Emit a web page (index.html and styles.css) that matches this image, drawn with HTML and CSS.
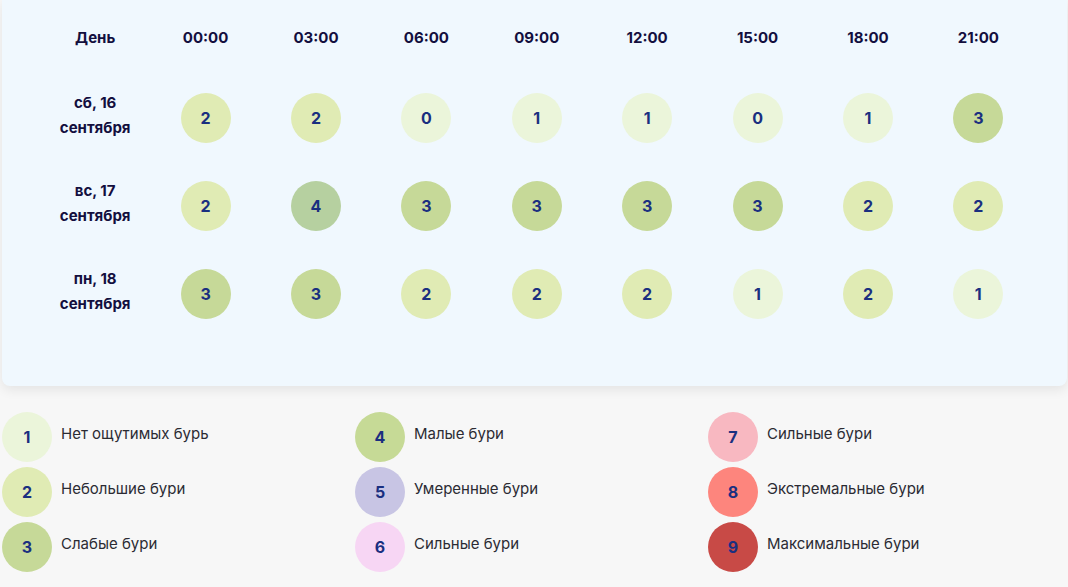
FILE: index.html
```html
<!DOCTYPE html>
<html lang="ru">
<head>
<meta charset="utf-8">
<title>Магнитные бури</title>
<link rel="stylesheet" href="styles.css">
</head>
<body>
<div class="panel">
  <div class="table">
    <div class="head">День</div>
    <div class="head">00:00</div>
    <div class="head">03:00</div>
    <div class="head">06:00</div>
    <div class="head">09:00</div>
    <div class="head">12:00</div>
    <div class="head">15:00</div>
    <div class="head">18:00</div>
    <div class="head">21:00</div>

    <div class="day">сб, 16<br>сентября</div>
    <div class="cell"><span class="dot l2">2</span></div>
    <div class="cell"><span class="dot l2">2</span></div>
    <div class="cell"><span class="dot l1">0</span></div>
    <div class="cell"><span class="dot l1">1</span></div>
    <div class="cell"><span class="dot l1">1</span></div>
    <div class="cell"><span class="dot l1">0</span></div>
    <div class="cell"><span class="dot l1">1</span></div>
    <div class="cell"><span class="dot l3">3</span></div>

    <div class="day">вс, 17<br>сентября</div>
    <div class="cell"><span class="dot l2">2</span></div>
    <div class="cell"><span class="dot l4t">4</span></div>
    <div class="cell"><span class="dot l3">3</span></div>
    <div class="cell"><span class="dot l3">3</span></div>
    <div class="cell"><span class="dot l3">3</span></div>
    <div class="cell"><span class="dot l3">3</span></div>
    <div class="cell"><span class="dot l2">2</span></div>
    <div class="cell"><span class="dot l2">2</span></div>

    <div class="day">пн, 18<br>сентября</div>
    <div class="cell"><span class="dot l3">3</span></div>
    <div class="cell"><span class="dot l3">3</span></div>
    <div class="cell"><span class="dot l2">2</span></div>
    <div class="cell"><span class="dot l2">2</span></div>
    <div class="cell"><span class="dot l2">2</span></div>
    <div class="cell"><span class="dot l1">1</span></div>
    <div class="cell"><span class="dot l2">2</span></div>
    <div class="cell"><span class="dot l1">1</span></div>
  </div>
</div>

<div class="legend">
  <div class="item"><span class="dot l1">1</span><span class="label">Нет ощутимых бурь</span></div>
  <div class="item"><span class="dot l4">4</span><span class="label">Малые бури</span></div>
  <div class="item"><span class="dot l7">7</span><span class="label">Сильные бури</span></div>
  <div class="item"><span class="dot l2">2</span><span class="label">Небольшие бури</span></div>
  <div class="item"><span class="dot l5">5</span><span class="label">Умеренные бури</span></div>
  <div class="item"><span class="dot l8">8</span><span class="label">Экстремальные бури</span></div>
  <div class="item"><span class="dot l3">3</span><span class="label">Слабые бури</span></div>
  <div class="item"><span class="dot l6">6</span><span class="label">Сильные бури</span></div>
  <div class="item"><span class="dot l9">9</span><span class="label">Максимальные бури</span></div>
</div>
</body>
</html>
```

FILE: styles.css
```css
* { box-sizing: border-box; }

body {
  margin: 0;
  background: #f7f7f7;
  font-family: Inter, "Noto Sans", "Liberation Sans", sans-serif;
}

.panel {
  margin-left: 2px;
  width: 1065px;
  height: 386px;
  padding: 2px 0 0 38px;
  background: #f0f8fe;
  border-radius: 0 0 8px 8px;
  box-shadow: 0 4px 12px rgba(0, 0, 0, 0.08);
}

.table {
  display: grid;
  grid-template-columns: repeat(9, 110.4px);
  grid-template-rows: 72px repeat(3, 88px);
}

.head, .day, .cell {
  display: flex;
  align-items: center;
  justify-content: center;
  text-align: center;
}

.head {
  padding-bottom: 2px;
  font-size: 15px;
  font-weight: 700;
  color: #130f3e;
}

.day {
  padding-bottom: 6px;
  font-size: 15px;
  font-weight: 700;
  line-height: 25px;
  color: #130f3e;
}

.dot {
  width: 50px;
  height: 50px;
  border-radius: 50%;
  display: flex;
  align-items: center;
  justify-content: center;
  flex: none;
  font-size: 16px;
  font-weight: 700;
  color: #1a2f80;
}

.l1 { background: #ebf5da; }
.l2 { background: #e0ebb4; }
.l3 { background: #c6d998; }
.l4t { background: #b6d0a0; }
.l4 { background: #c6da96; }
.l5 { background: #c8c5e4; }
.l6 { background: #f7d6f4; }
.l7 { background: #f8b8c1; }
.l8 { background: #fd857d; }
.l9 { background: #c84a46; }

.legend {
  display: grid;
  grid-template-columns: repeat(3, 353px);
  row-gap: 5px;
  margin: 26px 0 0 2px;
}

.item {
  display: flex;
  align-items: flex-start;
  gap: 9px;
}

.label {
  padding-top: 12px;
  font-size: 15px;
  line-height: 20px;
  color: #2b2b33;
}
```
